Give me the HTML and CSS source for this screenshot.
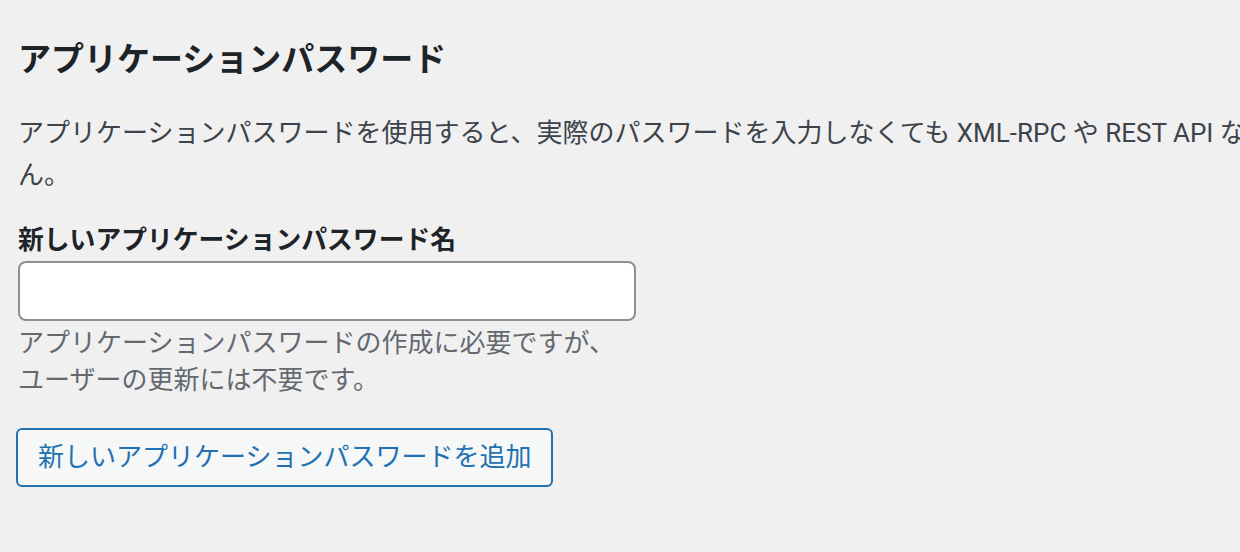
FILE: index.html
```html
<!DOCTYPE html>
<html lang="ja">
<head>
<meta charset="UTF-8" />
<meta name="viewport" content="width=device-width, initial-scale=1" />
<title>アプリケーションパスワード</title>
<link rel="stylesheet" href="styles.css">
</head>
<body>
<div class="wrap">
    <h2>アプリケーションパスワード</h2>
    <p class="intro">アプリケーションパスワードを使用すると、実際のパスワードを入力しなくても XML-RPC や REST API などの非対話型システムを介した認証が可能になります。アプリケーションパスワードは簡単に取り消すことができ、サイトへの従来のログインには使用できませ<br>ん。</p>
    <div class="form-group">
        <label for="new_application_password_name">新しいアプリケーションパスワード名</label>
        <input type="text" id="new_application_password_name" name="new_application_password_name" />
        <p class="description">アプリケーションパスワードの作成に必要ですが、<br>ユーザーの更新には不要です。</p>
    </div>
    <button type="button" class="button">新しいアプリケーションパスワードを追加</button>
</div>
</body>
</html>
```

FILE: styles.css
```css
body { margin: 0; background-color: #f0f0f1; font-family: Roboto, "Noto Sans CJK JP", sans-serif; color: #3c434a; overflow: hidden; }
.wrap { padding: 38px 0 0 18px; }
h2 { margin: 0; font-size: 33px; line-height: 44px; font-weight: 700; color: #1d2327; }
.intro { margin: 30px 0 0; font-size: 26px; line-height: 42px; white-space: nowrap; }
.form-group { margin-top: 26px; }
label { display: block; font-size: 25.8px; line-height: 36px; font-weight: 700; color: #1d2327; margin-bottom: 3px; }
input { display: block; width: 618px; height: 60px; box-sizing: border-box; border: 2px solid #8c8f94; border-radius: 8px; background: #fff; font-size: 26px; padding: 0 16px; }
.description { margin: 4px 0 0; font-size: 26px; line-height: 37px; color: #646970; }
.button { display: block; margin: 29px 0 0 -2px; height: 59px; padding: 0 20px; border: 2px solid #2271b1; border-radius: 6px; background: #f6f7f7; color: #2271b1; font-family: Roboto, "Noto Sans CJK JP", sans-serif; font-size: 26px; line-height: 55px; cursor: pointer; }
```
